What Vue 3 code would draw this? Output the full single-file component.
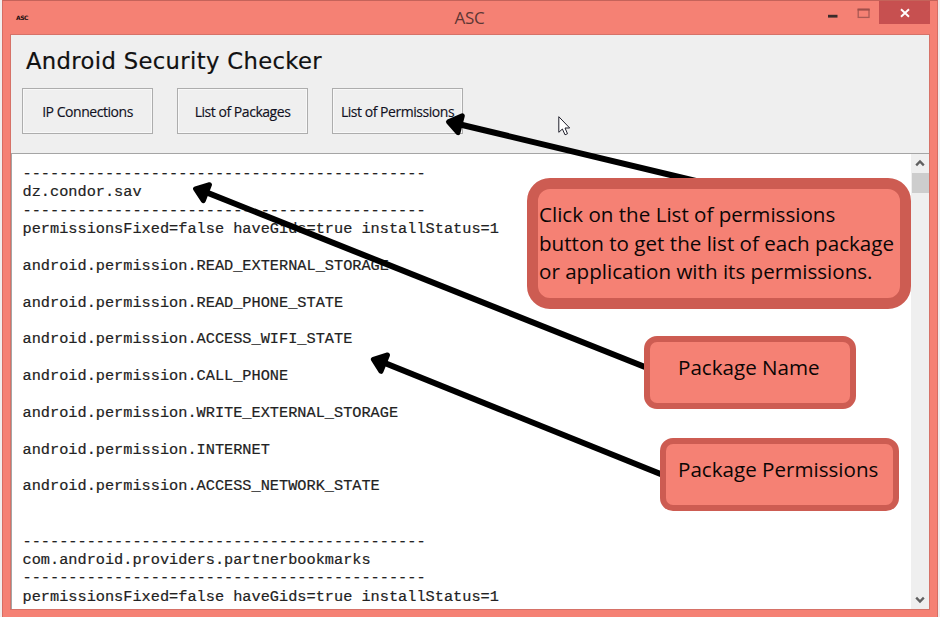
<script setup>
const actions = ['IP Connections', 'List of Packages', 'List of Permissions']
const rule = '-'.repeat(44)
const header = 'permissionsFixed=false haveGids=true installStatus=1'
const permissions = [
  'READ_EXTERNAL_STORAGE',
  'READ_PHONE_STATE',
  'ACCESS_WIFI_STATE',
  'CALL_PHONE',
  'WRITE_EXTERNAL_STORAGE',
  'INTERNET',
  'ACCESS_NETWORK_STATE',
]
const lines = [
  rule,
  'dz.condor.sav',
  rule,
  header,
  ...permissions.flatMap((p) => ['', 'android.permission.' + p]),
  '',
  '',
  rule,
  'com.android.providers.partnerbookmarks',
  rule,
  header,
]
const output = lines.join('\n')
</script>

<template>
  <div class="stage">
    <div class="window">
      <header class="titlebar">
        <span class="app-icon">ASC</span>
        <span class="caption">ASC</span>
        <div class="controls">
          <svg class="minmax" width="70" height="24" viewBox="0 0 70 24">
            <rect x="19" y="14.8" width="9.5" height="2.8" fill="#3b2c2b" />
            <rect x="49.2" y="9.4" width="10.8" height="8" fill="none" stroke="#ab5a54" stroke-width="1.3" />
            <path d="M48.6 9.6h12" stroke="#a04f4a" stroke-width="2" />
          </svg>
          <span class="close">
            <svg width="10" height="10" viewBox="0 0 10 10">
              <path d="M1 1.2L9 8.8M9 1.2L1 8.8" stroke="#fff" stroke-width="1.9" />
            </svg>
          </span>
        </div>
      </header>
      <main class="client">
        <section class="toolbar">
          <h1>Android Security Checker</h1>
          <div class="buttons">
            <button v-for="a in actions" :key="a">{{ a }}</button>
          </div>
        </section>
        <section class="viewer">
          <pre>{{ output }}</pre>
          <div class="scrollbar">
            <svg width="10" height="8" viewBox="0 0 10 8"><path d="M1.2 6.4L5 2.4l3.8 4" fill="none" stroke="#606060" stroke-width="2.3" /></svg>
            <div class="thumb"></div>
            <svg class="down" width="10" height="8" viewBox="0 0 10 8"><path d="M1.2 1.6L5 5.6l3.8-4" fill="none" stroke="#606060" stroke-width="2.3" /></svg>
          </div>
        </section>
      </main>
    </div>

    <svg class="arrows" width="940" height="617" viewBox="0 0 940 617">
      <g stroke="#000" stroke-width="6" fill="none">
        <path d="M456 123.5L700 182" />
        <path d="M203 191L650 369" />
        <path d="M381 361.5L668 477" />
      </g>
      <g stroke="#000" stroke-width="5" stroke-linejoin="round">
        <path d="M448.5 121.8L462.3 115.8L458 132.6Z" />
        <path d="M195.6 188.9L209.5 184.7L203.3 200.6Z" />
        <path d="M373.4 359.3L387.5 355L381 371.3Z" />
      </g>
      <path d="M558.8 116.7V132.3L562.4 129L565 134.8L567.5 133.7L565 128H569.7Z" fill="#fff" stroke="#20202c" stroke-width="1" />
    </svg>

    <div class="callout big">
      <span>Click on the List of permissions</span>
      <span>button to get the list of each package</span>
      <span>or application with its permissions.</span>
    </div>
    <div class="callout name"><span>Package Name</span></div>
    <div class="callout perms"><span>Package Permissions</span></div>
  </div>
</template>

<style>
body {
  margin: 0;
  overflow: hidden;
  background: #fff;
}
</style>

<style scoped>
.stage {
  position: relative;
  box-sizing: border-box;
  width: 940px;
  height: 617px;
  padding: 0 2px;
  overflow: hidden;
  background: #f2eeee;
}
.window {
  box-sizing: border-box;
  height: 617px;
  padding: 0 8px 7px;
  display: flex;
  flex-direction: column;
  background: #f58174;
  border-top: 1px solid #c5635a;
  border-left: 1px solid #d66d63;
  border-right: 1px solid #d66d63;
}
.titlebar {
  display: grid;
  grid-template-columns: 1fr auto 1fr;
  height: 33px;
  flex: none;
}
.app-icon {
  padding: 12px 0 0 5px;
  font: bold 6px/9px "DejaVu Sans", sans-serif;
  letter-spacing: -0.5px;
  color: #1c1010;
}
.caption {
  padding-top: 5px;
  font: 17px/24px "Open Sans", sans-serif;
  letter-spacing: -0.2px;
  margin-left: -1px;
  color: #5e3734;
}
.controls {
  display: flex;
  justify-content: flex-end;
  margin-right: -1px;
}
.minmax {
  margin-top: -1px;
}
.close {
  display: flex;
  align-items: center;
  justify-content: center;
  width: 51px;
  height: 23px;
  background: #c75050;
}
.client {
  flex: 1;
  min-height: 0;
  display: flex;
  flex-direction: column;
  background: #efefef;
  border: 1px solid #d67268;
  margin: 0 -1px 0 -1px;
}
.toolbar {
  height: 118px;
  flex: none;
}
h1 {
  margin: 0;
  padding: 10px 0 0 15px;
  font: 22.7px/32px "DejaVu Sans", sans-serif;
  letter-spacing: 0.35px;
  color: #111;
  -webkit-text-stroke: 0.2px #111;
  white-space: nowrap;
}
.buttons {
  display: flex;
  gap: 24px;
  padding: 11px 0 0 11px;
}
button {
  box-sizing: border-box;
  width: 131px;
  height: 46px;
  padding: 2px 0 0;
  border: 1px solid #adadad;
  background: #efefef;
  box-shadow: inset 0 0 0 1px #f8f8f8;
  font: 14px/20px "Open Sans", sans-serif;
  letter-spacing: -0.46px;
  color: #111122;
  -webkit-text-stroke: 0.15px #111122;
  white-space: nowrap;
}
.viewer {
  flex: 1;
  min-height: 0;
  display: flex;
  background: #fff;
  border-top: 1px solid #a5a5a5;
  border-left: 1px solid #a5a5a5;
}
pre {
  flex: 1;
  margin: 0;
  padding: 11px 0 0 10.5px;
  font: 15.28px/18.375px "Liberation Mono", monospace;
  color: #222;
  -webkit-text-stroke: 0.2px #222;
}
.scrollbar {
  width: 18px;
  padding: 5px 0 5px;
  box-sizing: border-box;
  display: flex;
  flex-direction: column;
  align-items: center;
  background: #efefef;
}
.thumb {
  width: 17px;
  height: 20px;
  margin-top: 6px;
  background: #cdcdcd;
}
.down {
  margin-top: auto;
}
.arrows {
  position: absolute;
  left: 0;
  top: 0;
}
.callout {
  position: absolute;
  box-sizing: border-box;
  display: flex;
  flex-direction: column;
  background: #f58174;
  border: 6px solid #cd5c52;
  border-radius: 13px;
  font: 20.6px/28.7px "Open Sans", sans-serif;
  color: #0c0605;
  white-space: nowrap;
}
.big {
  left: 527px;
  top: 178px;
  width: 384px;
  height: 131px;
  border-width: 11px;
  border-radius: 23px;
  padding: 11px 0 0 1px;
}
.name {
  left: 644px;
  top: 336px;
  width: 212px;
  height: 73px;
  padding: 11px 0 0 28px;
}
.perms {
  left: 660px;
  top: 438px;
  width: 239px;
  height: 73px;
  padding: 11px 0 0 12px;
}
</style>
